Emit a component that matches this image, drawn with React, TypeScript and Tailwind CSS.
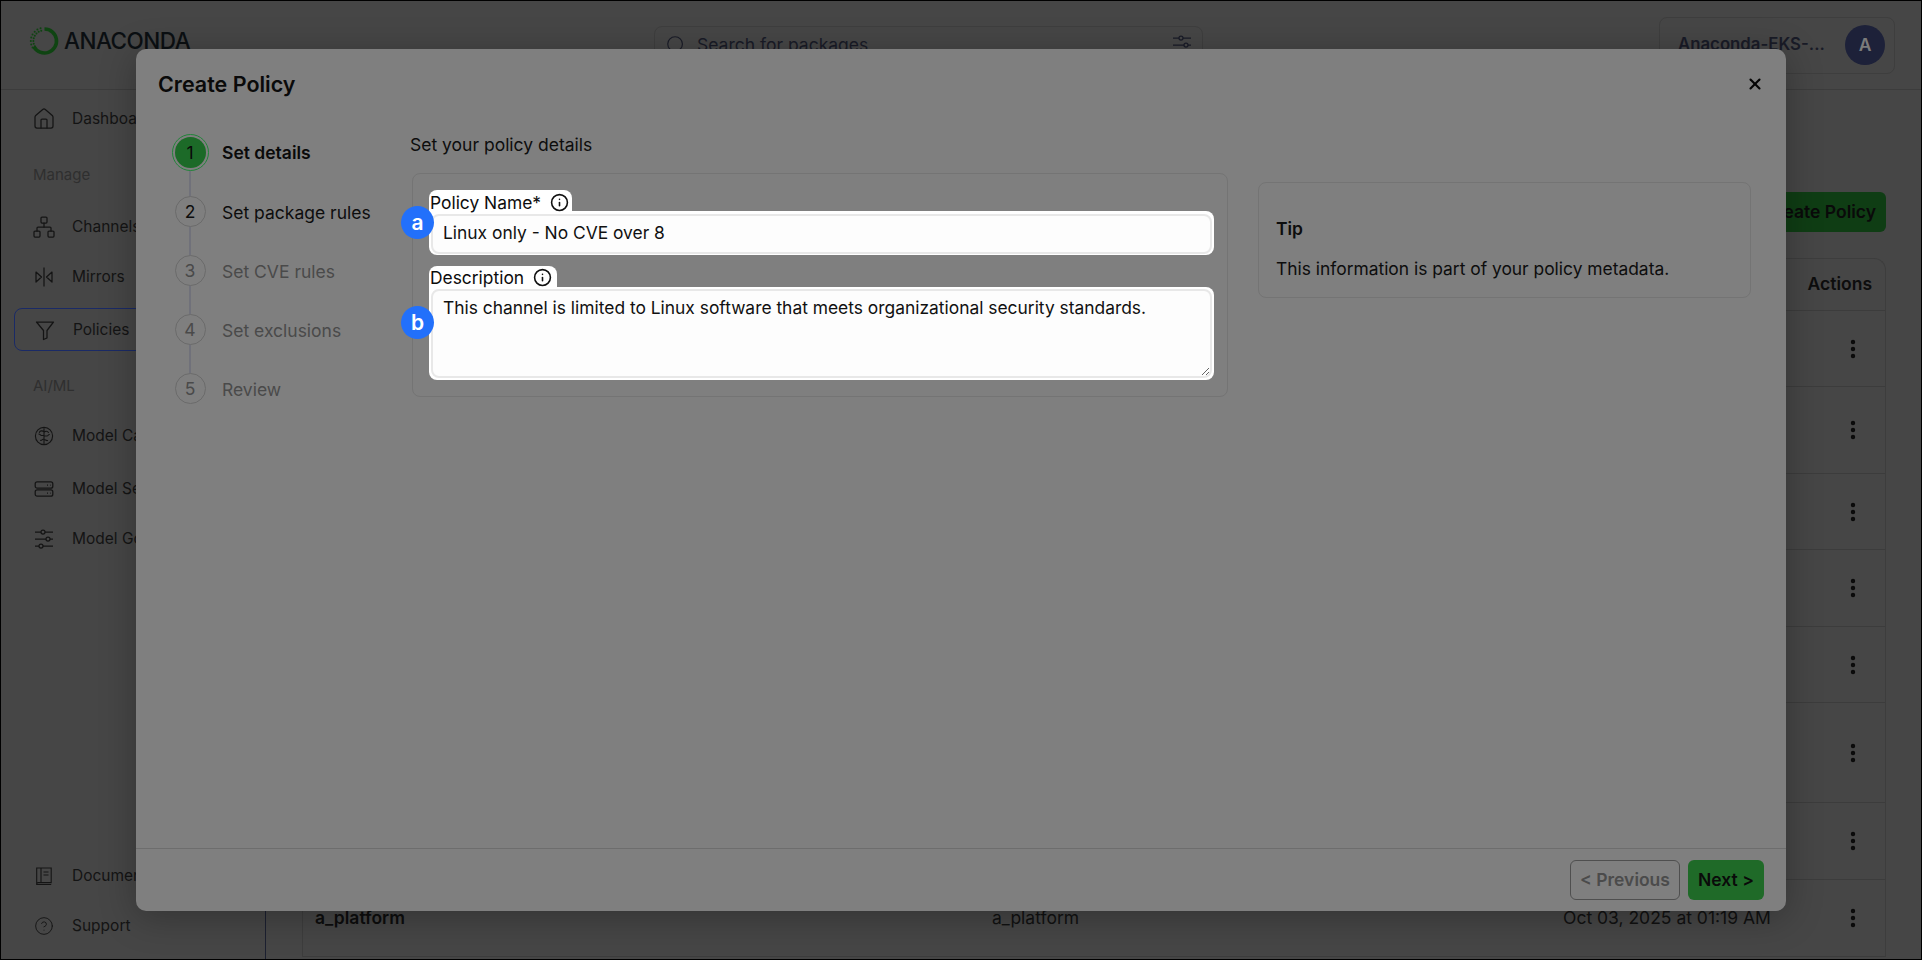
import { CircleHelp, EllipsisVertical, House, Info, Network, Search, X } from "lucide-react";
import type { ReactNode } from "react";

const Sliders = ({ size = 24 }: { size?: number }) => (
  <svg width={size} height={size} viewBox="0 0 24 24" fill="none" stroke="currentColor" strokeWidth="1.25">
    <path d="M3 5h6M13 5h8M3 12h11M18 12h3M3 19h4M11 19h10" />
    <circle cx="11" cy="5" r="2" />
    <circle cx="16" cy="12" r="2" />
    <circle cx="9" cy="19" r="2" />
  </svg>
);

const Mirror = () => (
  <svg width="24" height="24" viewBox="0 0 24 24" fill="none" stroke="currentColor" strokeWidth="1.25" strokeLinejoin="round">
    <path d="M12 2.5v19M4 7l5.5 5L4 17zM20 7l-5.5 5 5.500 5z" />
  </svg>
);

const PolicyFunnel = () => (
  <svg width="24" height="24" viewBox="0 0 24 24" fill="none" stroke="currentColor" strokeWidth="1.25" strokeLinejoin="round">
    <path d="M3.500 4h17l-6.500 8.500V20l-3.500 1.500v-9z" />
  </svg>
);

const BrainCircle = () => (
  <svg width="24" height="24" viewBox="0 0 24 24" fill="none" stroke="currentColor" strokeWidth="1.1" strokeLinecap="round">
    <circle cx="12" cy="12" r="8.600" />
    <path d="M12 4.500v15M12 8c-1.500-1.800-4-1.400-4.600.4M12 11.500H9.500c-1.200 0-1.500-1.500-2.600-1.500M12 15c-1.500-.2-1.800 1.600-3.400 1.400M12 8.500c1.500-1.800 3.600-1.600 4.400 0M12 12h3c1 0 1.300-1.500 2.300-1.500M12 15.500c1.500 0 2 1.500 3.600 1" />
  </svg>
);

const ServerStack = () => (
  <svg width="24" height="24" viewBox="0 0 24 24" fill="none" stroke="currentColor" strokeWidth="1.25">
    <rect x="3.200" y="4.800" width="17.600" height="6.400" rx="2" />
    <rect x="3.200" y="12.800" width="17.600" height="6.400" rx="2" />
    <path d="M15 8h1M18 8h.6M15 16h1M18 16h.6" />
  </svg>
);

const DocBook = () => (
  <svg width="20" height="20" viewBox="0 0 20 20" fill="none" stroke="currentColor" strokeWidth="1.1">
    <path d="M2.700 2h14.500v14.600H4.300c-1 0-1.600.5-1.600 1.300zM2.700 17.900v.6h14.500M7 2v14.600M9.500 6h5M9.500 9h5" />
  </svg>
);

const AnacondaMark = () => {
  const dots = [150, 165, 180, 195, 210, 225, 240, 255].flatMap((deg, i) =>
    [10.6, 13.2].map((r, j) => ({
      key: `${i}-${j}`,
      x: 15 + r * Math.cos((deg * Math.PI) / 180),
      y: 15 + r * Math.sin((deg * Math.PI) / 180),
    })),
  );

  return (
    <svg width="30" height="30" viewBox="0 0 30 30" fill="none">
      <path d="M15.500 3a12 12 0 1 1-10.600 17.600" stroke="#0f4412" strokeWidth="3.600" />
      {dots.map((dot) => (
        <circle key={dot.key} cx={dot.x} cy={dot.y} r="1" fill="#0f4412" />
      ))}
    </svg>
  );
};

const SideItem = ({
  icon,
  label,
  className = "",
}: {
  icon: ReactNode;
  label: string;
  className?: string;
}) => (
  <div className={`flex h-11 items-center gap-4 pl-[18px] text-[15.5px] text-[#141414] ${className}`}>
    <span className="flex w-6 justify-center">{icon}</span>
    <span>{label}</span>
  </div>
);

const rowHeights = [
  "h-[76px]",
  "h-[87px]",
  "h-[76px]",
  "h-[77px]",
  "h-[76px]",
  "h-[100px]",
  "h-[77px]",
  "h-[77px]",
];

const steps = [
  { n: 1, label: "Set details", state: "active" },
  { n: 2, label: "Set package rules", state: "next" },
  { n: 3, label: "Set CVE rules", state: "off" },
  { n: 4, label: "Set exclusions", state: "off" },
  { n: 5, label: "Review", state: "off" },
];

const Stepper = () => (
  <div className="relative ml-[35px] mt-1 w-[239px] shrink-0 self-start">
    <span className="absolute bottom-[30px] left-[18px] top-[30px] w-[2px] bg-[#70717a]" />
    {steps.map((step) => (
      <div key={step.n} className="relative flex h-[59px] items-center gap-[13px]">
        <span className="flex w-[38px] justify-center">
          {step.state === "active" ? (
            <span className="flex h-[37px] w-[37px] items-center justify-center rounded-full border border-[#22843a] bg-[#7f7f7f]">
              <span className="flex h-[31px] w-[31px] items-center justify-center rounded-full bg-[#1c6a28] pt-[2px] text-[17.5px] text-[#0a0a0a]">
                {step.n}
              </span>
            </span>
          ) : (
            <span
              className={`flex h-[31px] w-[31px] items-center justify-center rounded-full border border-[#6b6b6b] bg-[#7f7f7f] pt-[2px] text-[17.5px] ${
                step.state === "next" ? "text-[#0d0d0d]" : "text-[#4a4a4a]"
              }`}
            >
              {step.n}
            </span>
          )}
        </span>
        <span
          className={`whitespace-nowrap text-[17.5px] ${
            step.state === "active"
              ? "pt-[1px] font-semibold text-[#0a0a0a]"
              : step.state === "next"
                ? "pt-[3px] text-[#0d0d0d]"
                : "pt-[3px] text-[#4a4a4a]"
          }`}
        >
          {step.label}
        </span>
      </div>
    ))}
  </div>
);

const Badge = ({ letter, className }: { letter: string; className: string }) => (
  <span
    className={`absolute -left-[28px] flex h-[33px] w-[33px] items-center justify-center rounded-full bg-[#2270fb] text-[21px] font-semibold text-white ${className}`}
  >
    {letter}
  </span>
);

const CreatePolicyModal = () => (
  <div className="absolute left-[135px] top-[48px] flex h-[862px] w-[1650px] flex-col rounded-[10px] bg-[#7f7f7f] shadow-[0_6px_36px_rgba(0,0,0,0.28)]">
    <div className="flex h-[70px] shrink-0 items-center justify-between pl-[22px] pr-[22px]">
      <h2 className="text-[21.5px] font-semibold text-[#0a0a0a]">Create Policy</h2>
      <X size={18} strokeWidth={2.8} className="text-[#050505]" />
    </div>

    <div className="flex flex-1">
      <Stepper />

      <div className="w-[818px] shrink-0">
        <p className="mt-[14px] text-[17.5px] leading-6 text-[#0d0d0d]">Set your policy details</p>
        <div className="ml-[2px] mt-4 w-[816px] rounded-lg border border-[#747474] px-4 py-4">
          <div className="relative">
            <div className="flex h-[21px] w-[143px] items-start gap-[9px] rounded-t-lg bg-white pl-px pt-px text-[17.4px] leading-6 text-[#0d0d0d]">
              Policy Name*
              <Info size={19} strokeWidth={2} className="mt-[2px] text-[#111]" />
            </div>
            <div className="w-[785px] rounded-lg rounded-tl-none bg-white px-[2px] pb-px pt-[3px]">
              <input
                readOnly
                value="Linux only - No CVE over 8"
                className="h-10 w-full rounded-lg border-2 border-[#e8e8e8] bg-[#fdfdfd] px-[10px] pb-[3px] text-[17.4px] text-[#111] outline-none"
              />
            </div>
            <Badge letter="a" className="top-4" />
          </div>

          <div className="relative mt-[11px]">
            <div className="flex h-[21px] w-[128px] items-start gap-[9px] rounded-t-lg bg-white pl-px text-[17.4px] leading-6 text-[#0d0d0d]">
              Description
              <Info size={19} strokeWidth={2} className="mt-[2px] text-[#111]" />
            </div>
            <div className="flex w-[785px] rounded-lg rounded-tl-none bg-white px-[2px] pb-[2px] pt-[2px]">
              <textarea
                readOnly
                value="This channel is limited to Linux software that meets organizational security standards."
                className="h-[89px] w-full resize-y rounded-lg border-2 border-[#e8e8e8] bg-[#fdfdfd] px-[10px] py-[5px] text-[17.4px] leading-6 text-[#111] outline-none"
              />
            </div>
            <Badge letter="b" className="top-10" />
          </div>
        </div>
      </div>

      <div className="ml-[30px] mt-[63px] flex h-[116px] w-[493px] flex-col rounded-lg border border-[#747474] pl-[17px] pt-[34px] text-[17.4px] text-[#0d0d0d]">
        <p className="font-semibold leading-6">Tip</p>
        <p className="mt-4 leading-6">This information is part of your policy metadata.</p>
      </div>
    </div>

    <div className="flex h-[63px] shrink-0 items-start justify-end gap-2 border-t border-[#6d6d6d] pr-[22px] pt-[11px]">
      <button
        type="button"
        className="h-10 w-[110px] rounded-md border border-[#4f4f4f] text-[17.5px] font-semibold text-[#4b4b4b]"
      >
        &lt; Previous
      </button>
      <button
        type="button"
        className="h-10 w-[76px] rounded-md bg-[#1f6a28] text-[17.5px] font-semibold text-[#0a0a0a]"
      >
        Next &gt;
      </button>
    </div>
  </div>
);

export default function App() {
  return (
    <div className="relative flex h-screen w-screen flex-col overflow-hidden border border-black bg-[#464646] font-['Inter',sans-serif] text-[#111]">
      <header className="flex h-[89px] shrink-0 items-center border-b border-[#3c3c3c] pr-[26px]">
        <div className="mb-2 flex w-[653px] shrink-0 items-center gap-[5px] pl-[28px]">
          <AnacondaMark />
          <span className="text-[22.5px] font-medium tracking-[-0.5px] text-[#0b0f12]">ANACONDA</span>
        </div>
        <div className="flex h-[38px] w-[549px] items-center rounded-lg border border-[#3e3e3e] pl-[10px] pr-[8px] text-[#191b27]">
          <Search size={22} strokeWidth={1.25} />
          <span className="ml-[10px] flex-1 text-[17.5px]">Search for packages</span>
          <Sliders />
        </div>
        <div className="ml-auto flex h-[57px] w-[236px] items-center justify-between rounded-lg border border-[#3e3e3e] pl-[18px] pr-[9px]">
          <span className="text-[16.8px] font-semibold text-[#191b27]">Anaconda-EKS-...</span>
          <span className="flex h-10 w-10 items-center justify-center rounded-full bg-[#1d2139] text-[17.5px] font-semibold text-[#7b7b7b]">
            A
          </span>
        </div>
      </header>

      <div className="flex min-h-0 flex-1">
        <aside className="flex w-[265px] shrink-0 flex-col border-r border-[#1c2030] pb-[11px] pl-[13px] pr-[9px] pt-[7px]">
          <SideItem icon={<House size={24} strokeWidth={1.25} />} label="Dashboard" />
          <p className="mt-6 h-5 pl-[19px] text-[15px] leading-5 text-[#2f2f2f]">Manage</p>
          <SideItem className="mt-5" icon={<Network size={24} strokeWidth={1.25} />} label="Channels" />
          <SideItem className="mt-[6px]" icon={<Mirror />} label="Mirrors" />
          <SideItem
            className="mt-[9px] h-[43px] rounded-lg border border-[#1a2a66] pl-[17px]"
            icon={<PolicyFunnel />}
            label="Policies"
          />
          <p className="mt-[25px] h-5 pl-[19px] text-[15px] leading-5 text-[#2f2f2f]">AI/ML</p>
          <SideItem className="mt-[18px]" icon={<BrainCircle />} label="Model Catalog" />
          <SideItem className="mt-[9px]" icon={<ServerStack />} label="Model Servers" />
          <SideItem className="mt-[6px]" icon={<Sliders />} label="Model Governance" />
          <div className="mt-auto">
            <div className="flex h-11 items-center gap-[18px] pl-5 text-[15.5px] text-[#141414]">
              <DocBook />
              <span>Documentation</span>
            </div>
            <div className="mt-[6px] flex h-11 items-center gap-[18px] pl-5 text-[15.5px] text-[#141414]">
              <CircleHelp size={20} strokeWidth={1.1} />
              <span>Support</span>
            </div>
          </div>
        </aside>

        <main className="min-w-0 flex-1 pl-9 pr-[35px] pt-[102px]">
          <div className="flex justify-end">
            <button
              type="button"
              className="h-10 rounded-md bg-[#0f3d14] px-[10px] text-[17.5px] font-semibold text-[#0a0a0a]"
            >
              Create Policy
            </button>
          </div>

          <div className="mt-[26px] rounded-t-xl border border-b-0 border-[#3d3d3d]">
            <table className="w-full table-fixed border-separate border-spacing-0 text-[17.5px]">
              <thead>
                <tr>
                  <th className="h-[52px] w-[677px] border-b border-[#3c3c3c]" />
                  <th className="h-[52px] w-[573px] border-b border-[#3c3c3c]" />
                  <th className="h-[52px] w-[238px] border-b border-[#3c3c3c]" />
                  <th className="h-[52px] border-b border-[#3c3c3c] pr-[13px] text-right font-semibold text-[#0d0d0d]">
                    Actions
                  </th>
                </tr>
              </thead>
              <tbody>
                {rowHeights.map((height, i) => {
                  const isLast = i === rowHeights.length - 1;

                  return (
                    <tr key={height + i}>
                      <td className={`${height} border-b border-[#3c3c3c] pl-3 font-semibold text-[#0d0d0d]`}>
                        {isLast && "a_platform"}
                      </td>
                      <td className={`${height} border-b border-[#3c3c3c] pl-3 text-[#111]`}>
                        {isLast && "a_platform"}
                      </td>
                      <td className={`${height} border-b border-[#3c3c3c] pl-[10px] text-[#111]`}>
                        {isLast && "Oct 03, 2025 at 01:19 AM"}
                      </td>
                      <td className={`${height} border-b border-[#3c3c3c] pr-5`}>
                        <div className="flex justify-end">
                          <EllipsisVertical size={24} strokeWidth={2.4} className="text-[#0a0a0a]" />
                        </div>
                      </td>
                    </tr>
                  );
                })}
              </tbody>
            </table>
          </div>
        </main>
      </div>

      <CreatePolicyModal />
    </div>
  );
}
